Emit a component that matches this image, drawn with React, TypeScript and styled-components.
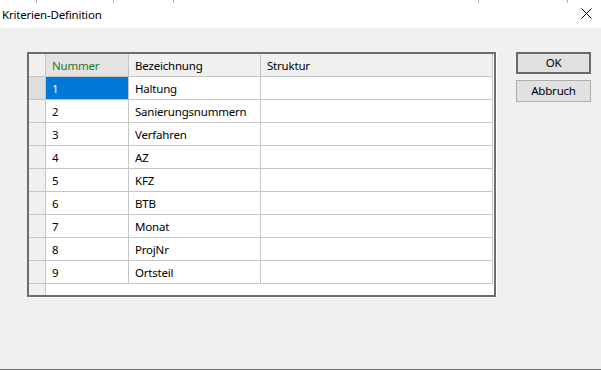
import React from "react";
import styled, { createGlobalStyle } from "styled-components";

const GlobalStyle = createGlobalStyle`
  html, body { margin: 0; padding: 0; }
  body {
    width: 601px;
    height: 370px;
    overflow: hidden;
    font-family: "Noto Sans", "Open Sans", sans-serif;
    font-size: 11.5px;
    letter-spacing: -0.2px;
    color: #000;
    background: #f0f0f0;
  }
`;

const Window = styled.div`
  width: 601px;
  height: 370px;
  display: flex;
  flex-direction: column;
  box-sizing: border-box;
  border-bottom: 1px solid #6b6b6b;
  background: #f0f0f0;
`;

const TopStrip = styled.div`
  height: 3px;
  display: flex;
  background: #ffffff;
`;

const StripSeg = styled.div<{ $w: number }>`
  width: ${(p) => p.$w}px;
  height: 100%;
  box-sizing: border-box;
  border-right: 1px solid #b4b4b4;
  flex: none;
`;

const TitleBar = styled.div`
  height: 25px;
  display: flex;
  align-items: center;
  justify-content: space-between;
  background: #ffffff;
  padding: 0 9px 0 2px;
  line-height: 1;
`;

const TitleText = styled.span`
  margin-top: -2px;
`;

const CloseIcon = styled.svg`
  width: 11px;
  height: 11px;
  margin-top: -4px;
`;

const Body = styled.div`
  flex: 1;
  display: flex;
  align-items: flex-start;
  gap: 20px;
  padding: 24px 0 0 27px;
`;

const GridFrame = styled.div`
  width: 469px;
  height: 245px;
  box-sizing: border-box;
  border: 2px solid #6d6d6d;
  box-shadow: 1px 1px 0 #ffffff;
  background: #ffffff;
  display: flex;
  flex-direction: column;
`;

const Row = styled.div`
  display: flex;
  height: 23px;
  flex: none;
`;

const Cell = styled.div<{ $w: number; $header?: boolean; $selected?: boolean; $green?: boolean; $active?: boolean }>`
  width: ${(p) => p.$w}px;
  flex: none;
  box-sizing: border-box;
  border-right: 1px solid #c6c6c6;
  border-bottom: 1px solid #c6c6c6;
  padding-left: 6px;
  display: flex;
  align-items: center;
  white-space: nowrap;
  overflow: hidden;
  background: ${(p) =>
    p.$selected ? "#0078d7" : p.$active ? "#e3e3e3" : p.$header ? "#f0f0f0" : "#ffffff"};
  color: ${(p) => (p.$selected ? "#ffffff" : p.$green ? "#1f7a1f" : "#000000")};
`;

const RowHead = styled.div<{ $active?: boolean }>`
  width: 17px;
  flex: none;
  box-sizing: border-box;
  border-right: 1px solid #c6c6c6;
  border-bottom: 1px solid #c6c6c6;
  background: ${(p) => (p.$active ? "#dedede" : "#f0f0f0")};
`;

const Filler = styled.div`
  flex: 1;
  display: flex;
`;

const FillerHead = styled.div`
  width: 17px;
  box-sizing: border-box;
  border-right: 1px solid #c6c6c6;
  background: #f0f0f0;
`;

const Buttons = styled.div`
  display: flex;
  flex-direction: column;
  gap: 6px;
`;

const Button = styled.button<{ $default?: boolean }>`
  width: 75px;
  height: 22px;
  box-sizing: border-box;
  margin: 0;
  padding: 0 0 1px;
  font-family: "Noto Sans", "Open Sans", sans-serif;
  font-size: 11.5px;
  letter-spacing: -0.2px;
  color: #000;
  background: #e1e1e1;
  border: ${(p) => (p.$default ? "2px solid #6a6a6a" : "1px solid #adadad")};
  display: flex;
  align-items: center;
  justify-content: center;
`;

const cols = [83, 132, 232];

const data: [string, string][] = [
  ["1", "Haltung"],
  ["2", "Sanierungsnummern"],
  ["3", "Verfahren"],
  ["4", "AZ"],
  ["5", "KFZ"],
  ["6", "BTB"],
  ["7", "Monat"],
  ["8", "ProjNr"],
  ["9", "Ortsteil"],
];

export default function App() {
  return (
    <>
      <GlobalStyle />
      <Window>
        <TopStrip>
          <StripSeg $w={37} />
          <StripSeg $w={77} />
          <StripSeg $w={60} />
          <StripSeg $w={305} />
          <StripSeg $w={89} />
        </TopStrip>
        <TitleBar>
          <TitleText>Kriterien-Definition</TitleText>
          <CloseIcon viewBox="0 0 11 11">
            <path d="M0.5 0.5 L10.5 10.5 M10.5 0.5 L0.5 10.5" stroke="#000" strokeWidth="1" fill="none" />
          </CloseIcon>
        </TitleBar>
        <Body>
          <GridFrame>
            <Row>
              <RowHead />
              <Cell $w={cols[0]} $header $green $active>Nummer</Cell>
              <Cell $w={cols[1]} $header>Bezeichnung</Cell>
              <Cell $w={cols[2]} $header>Struktur</Cell>
            </Row>
            {data.map(([n, b], i) => (
              <Row key={n}>
                <RowHead $active={i === 0} />
                <Cell $w={cols[0]} $selected={i === 0}>{n}</Cell>
                <Cell $w={cols[1]}>{b}</Cell>
                <Cell $w={cols[2]}></Cell>
              </Row>
            ))}
            <Filler>
              <FillerHead />
            </Filler>
          </GridFrame>
          <Buttons>
            <Button $default>OK</Button>
            <Button>Abbruch</Button>
          </Buttons>
        </Body>
      </Window>
    </>
  );
}
